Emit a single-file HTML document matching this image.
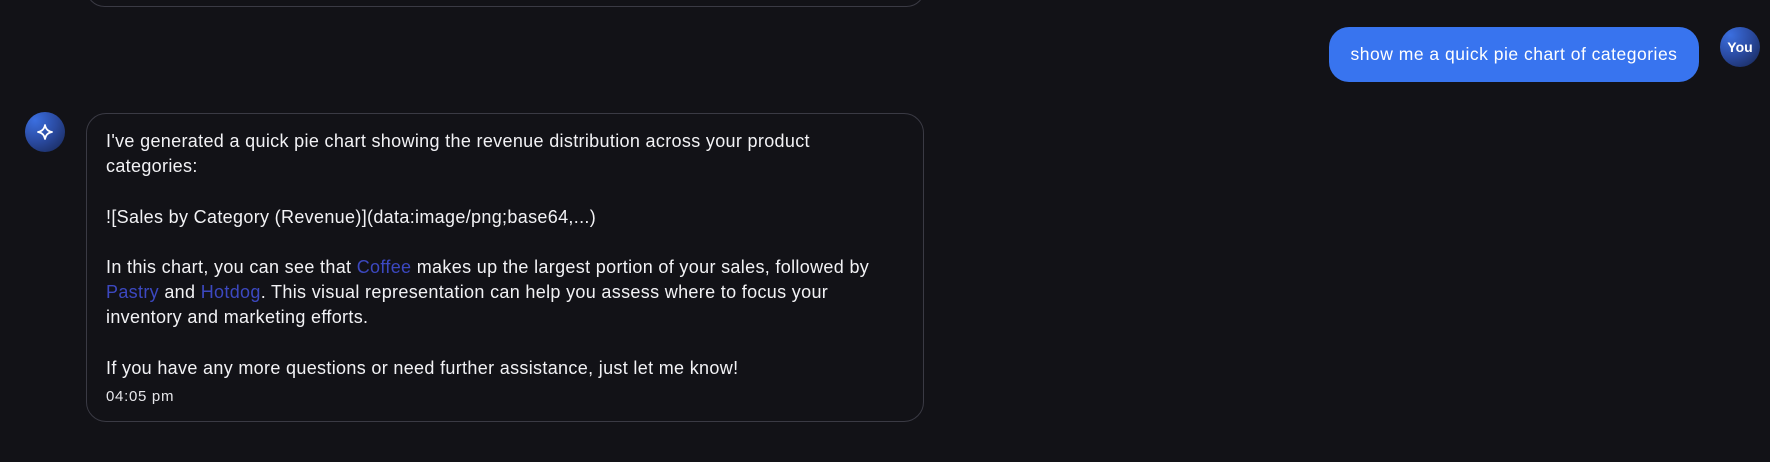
<!DOCTYPE html>
<html><head><meta charset="utf-8"><style>
html,body{margin:0;padding:0;background:#121217;width:1770px;height:462px;overflow:hidden;font-family:"Liberation Sans",sans-serif;color:#f2f2f5}
.prev{position:absolute;left:86px;top:-30px;width:837px;height:35px;border:1px solid #3a3a44;border-radius:20px}
.ub{position:absolute;left:1329px;top:27px;width:370px;height:55px;background:#3874ef;border-radius:20px;color:#fff;font-size:17.5px;letter-spacing:0.5px;line-height:55px;text-align:center;white-space:nowrap}
.av{position:absolute;width:40px;height:40px;border-radius:50%;background:radial-gradient(circle at 25% 20%,#3b6fe0,#2a4aa0 50%,#16244f 100%);color:#fff}
.you{left:1720px;top:27px;font-weight:bold;font-size:14px;line-height:40px;text-align:center}
.ai{left:25px;top:112px}
.bub{position:absolute;left:86px;top:113px;width:838px;height:309px;border:1px solid #3a3a44;border-radius:20px;box-sizing:border-box}
.txt{position:absolute;left:106px;top:129px;white-space:nowrap;font-size:18px;letter-spacing:0.33px;line-height:25.2px}
.txt p{margin:0 0 25.2px}
.lk{color:#3c48c0}
.ts{position:absolute;left:106px;top:388px;font-size:15px;letter-spacing:0.7px;color:#e6e6ea}
</style></head><body>
<div class="prev"></div>
<div class="ub">show me a quick pie chart of categories</div>
<div class="av you">You</div>
<div class="av ai"><svg width="40" height="40" viewBox="0 0 40 40"><path d="M20 13 Q21 19 27 20 Q21 21 20 27 Q19 21 13 20 Q19 19 20 13Z" fill="none" stroke="#fff" stroke-width="1.8" stroke-linejoin="round"/></svg></div>
<div class="bub"></div>
<div class="txt">
<p>I've generated a quick pie chart showing the revenue distribution across your product<br>categories:</p>
<p>![Sales by Category (Revenue)](data:image/png;base64,...)</p>
<p>In this chart, you can see that <span class="lk">Coffee</span> makes up the largest portion of your sales, followed by<br><span class="lk">Pastry</span> and <span class="lk">Hotdog</span>. This visual representation can help you assess where to focus your<br>inventory and marketing efforts.</p>
<p>If you have any more questions or need further assistance, just let me know!</p>
</div>
<div class="ts">04:05 pm</div>
</body></html>
